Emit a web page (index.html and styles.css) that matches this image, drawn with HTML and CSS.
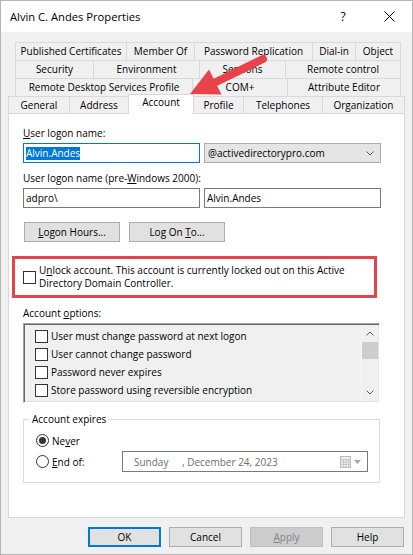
FILE: index.html
```html
<!DOCTYPE html>
<html lang="en">
<head>
<meta charset="utf-8">
<title>Alvin C. Andes Properties</title>
<link rel="stylesheet" href="styles.css">
</head>
<body>
<div class="window">
  <header class="titlebar">
    <span class="title">Alvin C. Andes Properties</span>
    <span class="caption-btn help">?</span>
    <span class="caption-btn">
      <svg width="11" height="11" viewBox="0 0 11 11"><path d="M0.5 0.5 L10.5 10.5 M10.5 0.5 L0.5 10.5" stroke="#000" stroke-width="1" fill="none"/></svg>
    </span>
  </header>

  <div class="client">
    <nav class="tabstrip">
      <div class="tab-row row-1">
        <div class="tab">Published Certificates</div>
        <div class="tab">Member Of</div>
        <div class="tab">Password Replication</div>
        <div class="tab">Dial-in</div>
        <div class="tab">Object</div>
      </div>
      <div class="tab-row row-2">
        <div class="tab">Security</div>
        <div class="tab">Environment</div>
        <div class="tab">Sessions</div>
        <div class="tab">Remote control</div>
      </div>
      <div class="tab-row row-3">
        <div class="tab">Remote Desktop Services Profile</div>
        <div class="tab">COM+</div>
        <div class="tab">Attribute Editor</div>
      </div>
      <div class="tab-row row-4">
        <div class="tab">General</div>
        <div class="tab">Address</div>
        <div class="tab tab-active">Account</div>
        <div class="tab">Profile</div>
        <div class="tab">Telephones</div>
        <div class="tab">Organization</div>
      </div>
    </nav>

    <section class="page">
      <div class="label label-first"><u>U</u>ser logon name:</div>
      <div class="field-pair">
        <div class="textbox focused"><span class="selection">Alvin.Andes</span></div>
        <div class="combo">
          <span>@activedirectorypro.com</span>
          <svg width="8" height="5" viewBox="0 0 8 5"><path d="M0.5 0.5 L4 4 L7.5 0.5" stroke="#555" stroke-width="1" fill="none"/></svg>
        </div>
      </div>

      <div class="label">User logon name (pre-<u>W</u>indows 2000):</div>
      <div class="field-pair">
        <div class="textbox">adpro\</div>
        <div class="textbox">Alvin.Andes</div>
      </div>

      <div class="button-row">
        <div class="btn"><u>L</u>ogon Hours...</div>
        <div class="btn">Log On <u>T</u>o...</div>
      </div>

      <div class="lockout">
        <span class="check"></span>
        <span class="lockout-text">U<u>n</u>lock account. This account is currently locked out on this Active<br>Directory Domain Controller.</span>
      </div>

      <div class="label options-label">Account <u>o</u>ptions:</div>
      <div class="listbox">
        <ul class="options">
          <li><span class="check"></span><span>User must change password at next logon</span></li>
          <li><span class="check"></span><span>User cannot change password</span></li>
          <li><span class="check"></span><span>Password never expires</span></li>
          <li><span class="check"></span><span>Store password using reversible encryption</span></li>
        </ul>
        <div class="scrollbar">
          <div class="sb-btn"><svg width="8" height="5" viewBox="0 0 8 5"><path d="M0.5 4.5 L4 1 L7.5 4.5" stroke="#606060" stroke-width="1" fill="none"/></svg></div>
          <div class="sb-thumb"></div>
          <div class="sb-track"></div>
          <div class="sb-btn"><svg width="8" height="5" viewBox="0 0 8 5"><path d="M0.5 0.5 L4 4 L7.5 0.5" stroke="#606060" stroke-width="1" fill="none"/></svg></div>
        </div>
      </div>

      <fieldset class="expires">
        <legend>Account expires</legend>
        <div class="expire-row">
          <span class="radio-col"><span class="radio checked"></span><span>Ne<u>v</u>er</span></span>
        </div>
        <div class="expire-row">
          <span class="radio-col"><span class="radio"></span><span><u>E</u>nd of:</span></span>
          <div class="datepicker">
            <span class="day">Sunday</span><span>, December 24, 2023</span>
            <span class="cal">
              <svg width="11" height="12" viewBox="0 0 11 12">
                <rect x="0.5" y="0.5" width="10" height="11" fill="#ececec" stroke="#b8b8b8"/>
                <path d="M0.5 3.5 H10.5 M0.5 6 H10.5 M0.5 8.5 H10.5 M3.5 3.5 V11.5 M6 3.5 V11.5 M8.5 3.5 V11.5" stroke="#c8c8c8" stroke-width="1" fill="none"/>
              </svg>
              <svg width="7" height="4" viewBox="0 0 7 4"><path d="M0 0 H7 L3.5 4 Z" fill="#a8a8a8"/></svg>
            </span>
          </div>
        </div>
      </fieldset>
    </section>

    <footer class="actions">
      <div class="btn btn-default">OK</div>
      <div class="btn">Cancel</div>
      <div class="btn btn-disabled"><u>A</u>pply</div>
      <div class="btn">Help</div>
    </footer>
  </div>
</div>

<svg class="callout" width="413" height="555" viewBox="0 0 413 555">
  <line x1="263" y1="59" x2="214" y2="83" stroke="#e8424a" stroke-width="8" stroke-linecap="round"/>
  <polygon points="190,94 209,69.5 221.5,94.5" fill="#e8424a"/>
</svg>
</body>
</html>
```

FILE: styles.css
```css
* { box-sizing: border-box; }

html, body { margin: 0; padding: 0; }

body {
  position: relative;
  width: 413px;
  height: 555px;
  overflow: hidden;
  background: #fff;
  color: #000;
  font-family: "Open Sans", "Segoe UI", "Liberation Sans", sans-serif;
  font-size: 10px;
  line-height: 14px;
}

u { text-decoration: underline; text-underline-offset: 1px; }

/* window frame */
.window {
  width: 413px;
  height: 555px;
  border: 1px solid #b5b5b5;
  background: #f0f0f0;
  display: flex;
  flex-direction: column;
}

.titlebar {
  flex: none;
  height: 31px;
  background: #fff;
  display: flex;
  align-items: center;
  padding-left: 9px;
}

.title { flex: 1; font-size: 11.2px; }

.caption-btn {
  width: 46px;
  height: 31px;
  display: flex;
  align-items: center;
  justify-content: center;
  font-size: 12px;
}

.client {
  flex: 1;
  display: flex;
  flex-direction: column;
  padding: 10px 7px 0;
}

/* multi-row tab strip */
.tabstrip { display: flex; flex-direction: column; }

.tab-row {
  display: grid;
  height: 18px;
  border-right: 1px solid #d9d9d9;
}

.row-1 { grid-template-columns: 111px 68px 118px 43px 45px; margin: 0 4px 0 7px; }
.row-2 { grid-template-columns: 78px 106px 86px 115px; margin: 0 4px 0 7px; }
.row-3 { grid-template-columns: 177px 95px 113px; margin: 0 4px 0 7px; }
.row-4 { grid-template-columns: 61px 59px 65px 50px 79px 82px; height: 17px; }

.tab {
  border-left: 1px solid #d9d9d9;
  border-top: 1px solid #d9d9d9;
  text-align: center;
  line-height: 17px;
  white-space: nowrap;
}

.row-4 .tab { line-height: 16px; }

.row-4 .tab.tab-active {
  position: relative;
  z-index: 1;
  margin: -2px -1px -1px 0;
  background: #fff;
  border-right: 1px solid #d9d9d9;
  line-height: 15px;
}

/* property page */
.page {
  flex: none;
  height: 405px;
  background: #fff;
  border: 1px solid #d9d9d9;
  padding: 0 23px 0 14px;
}

.label { margin-top: 8px; height: 14px; white-space: nowrap; }
.label-first { margin-top: 12px; }

.field-pair {
  display: grid;
  grid-template-columns: 177px 177px;
  column-gap: 4px;
  margin-top: 3px;
  height: 20px;
}

.textbox {
  height: 20px;
  border: 1px solid #7a7a7a;
  background: #fff;
  padding-left: 2px;
  line-height: 18px;
  white-space: nowrap;
}

.textbox.focused { border-color: #0078d7; }

.selection {
  display: inline-block;
  vertical-align: middle;
  background: #0078d7;
  color: #fff;
  line-height: 13px;
  margin-top: -2px;
}

.combo {
  height: 20px;
  border: 1px solid #adadad;
  background: #e5e5e5;
  display: flex;
  align-items: center;
  justify-content: space-between;
  padding: 0 6px 0 3px;
}

.button-row {
  display: flex;
  gap: 9px;
  margin-top: 14px;
  padding-left: 1px;
}

.btn {
  width: 96px;
  height: 20px;
  border: 1px solid #adadad;
  background: #e1e1e1;
  text-align: center;
  line-height: 18px;
}

/* highlighted lockout notice */
.lockout {
  margin: 14px 4px 0 -11px;
  height: 42px;
  border: 3px solid #e5434a;
  display: flex;
  align-items: center;
  gap: 3px;
  padding-left: 8px;
  line-height: 13px;
}

.check {
  flex: none;
  width: 13px;
  height: 13px;
  border: 1px solid #333;
  background: #fff;
}

.lockout-text { white-space: nowrap; }

/* account options list */
.listbox {
  margin-top: 3px;
  width: 357px;
  height: 80px;
  display: flex;
  border: 1px solid;
  border-color: #a0a0a0 #fff #fff #a0a0a0;
  box-shadow: inset 1px 1px #696969, inset -1px -1px #e3e3e3;
  background: #f0f0f0;
}

.options {
  flex: 1;
  list-style: none;
  margin: 0;
  padding: 3px 0 0 11px;
  overflow: hidden;
}

.options li {
  height: 18px;
  display: flex;
  align-items: center;
  gap: 3px;
  white-space: nowrap;
}

.scrollbar {
  flex: none;
  width: 17px;
  margin: 1px 1px 1px 0;
  display: flex;
  flex-direction: column;
  background: #f0f0f0;
  border-left: 1px solid #f7f7f7;
}

.sb-btn {
  height: 17px;
  display: flex;
  align-items: center;
  justify-content: center;
}

.sb-thumb { height: 17px; background: #cdcdcd; }
.sb-track { flex: 1; }

/* account expiry group */
.expires {
  margin: 9px 0 0;
  width: 357px;
  min-width: 0;
  border: 1px solid #dcdcdc;
  padding: 4px 0 10px 0;
}

.expires legend {
  margin-left: 6px;
  padding: 0 2px;
  line-height: 14px;
}

.expire-row {
  height: 21px;
  display: flex;
  align-items: center;
  padding-left: 12px;
}

.radio-col {
  width: 86px;
  display: flex;
  align-items: center;
  gap: 3px;
  flex: none;
}

.radio {
  width: 13px;
  height: 13px;
  border: 1px solid #333;
  border-radius: 50%;
  background: #fff;
  display: flex;
  align-items: center;
  justify-content: center;
  flex: none;
}

.radio.checked::after {
  content: "";
  width: 7px;
  height: 7px;
  border-radius: 50%;
  background: #333;
}

.datepicker {
  width: 246px;
  height: 21px;
  border: 1px solid #7a7a7a;
  background: #fff;
  display: flex;
  align-items: center;
  padding: 0 6px 0 11px;
  color: #6d6d6d;
  white-space: nowrap;
}

.day { display: inline-block; width: 48px; }

.cal {
  margin-left: auto;
  display: flex;
  align-items: center;
  gap: 3px;
}

/* dialog buttons */
.actions {
  display: flex;
  justify-content: flex-end;
  gap: 8px;
  margin-top: 9px;
  padding-right: 1px;
}

.actions .btn { width: 73px; }

.btn-default {
  border-color: #0078d7;
  box-shadow: inset 0 0 0 1px #0078d7;
}

.btn-disabled {
  background: #cccccc;
  border-color: #bfbfbf;
  color: #838383;
}

/* red pointer arrow drawn over the tabs */
.callout {
  position: absolute;
  left: 0;
  top: 0;
  pointer-events: none;
}
```
